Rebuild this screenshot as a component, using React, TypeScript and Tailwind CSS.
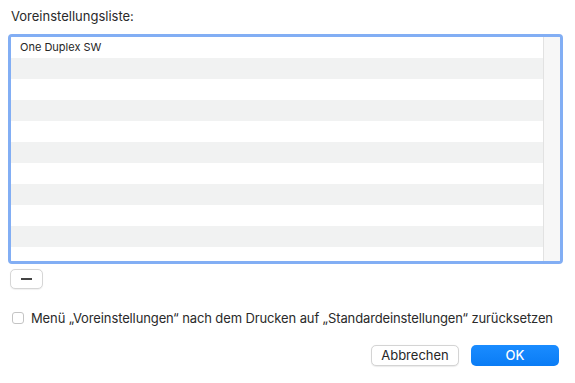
import React from "react";

const rows = Array.from({ length: 11 }, (_, i) => i);

export default function App() {
  return (
    <div
      className="w-[575px] h-[383px] bg-white text-[#262626] flex flex-col overflow-hidden"
      style={{ fontFamily: "Inter, 'Helvetica Neue', Arial, sans-serif" }}
    >
      <div className="mt-[8px] ml-[11px] text-[13px] leading-[16px] text-[#2a2a2a]">
        Voreinstellungsliste:
      </div>
      <div className="mt-[10px] ml-[8px] w-[555px] h-[230px] border-[3px] border-[#82aef4] rounded-[4px] flex overflow-hidden">
        <div className="flex-1 flex flex-col overflow-hidden">
          {rows.map((i) => (
            <div
              key={i}
              className={`h-[21px] shrink-0 flex items-center pl-[9px] text-[11px] ${
                i % 2 === 1 ? "bg-[#f1f2f2]" : "bg-white"
              }`}
            >
              {i === 0 ? "One Duplex SW" : ""}
            </div>
          ))}
        </div>
        <div className="w-[17px] border-l border-[#e2e2e2] bg-[#f7f7f7]" />
      </div>
      <div className="mt-[5px] ml-[10px] w-[33px] h-[20px] border border-[#d6d6d6] rounded-[5px] bg-white flex items-center justify-center shadow-[0_0.5px_1px_rgba(0,0,0,0.06)]">
        <div className="w-[11px] h-[1.5px] bg-[#444]" />
      </div>
      <div className="mt-[23px] ml-[12px] flex items-center h-[12px]">
        <div className="w-[12px] h-[12px] border border-[#c4c4c4] rounded-[3px] bg-white" />
        <div className="ml-[7px] text-[13px] leading-[16px] tracking-[-0.12px] whitespace-nowrap text-[#2a2a2a]">
          Menü „Voreinstellungen“ nach dem Drucken auf „Standardeinstellungen“ zurücksetzen
        </div>
      </div>
      <div className="mt-[21px] flex justify-end pr-[16px] gap-[12px]">
        <div className="w-[88px] h-[21px] border border-[#d4d4d4] rounded-[5px] bg-white flex items-center justify-center text-[13px] text-[#262626] shadow-[0_0.5px_1px_rgba(0,0,0,0.08)]">
          Abbrechen
        </div>
        <div className="w-[88px] h-[21px] rounded-[5px] bg-[linear-gradient(#1a8cff,#0a7cf5)] flex items-center justify-center text-[13px] font-medium text-white">
          OK
        </div>
      </div>
    </div>
  );
}
